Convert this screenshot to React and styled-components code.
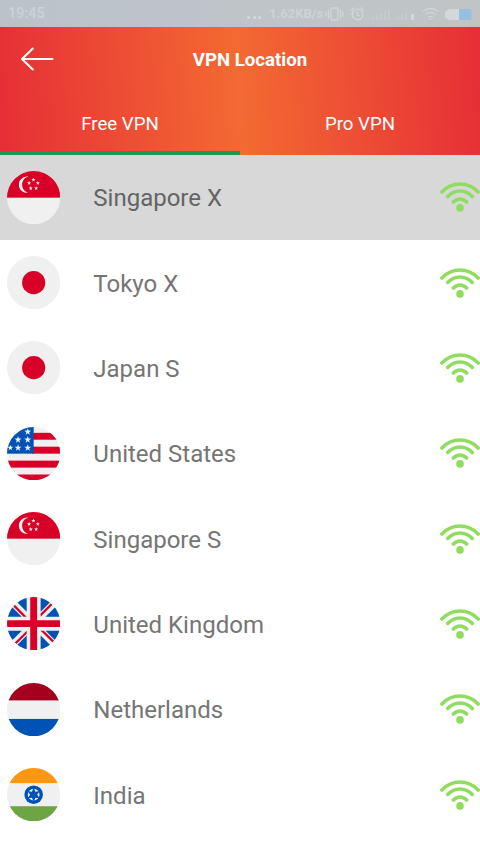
import React, { useState } from "react";
import styled, { createGlobalStyle } from "styled-components";

const RED = "#d80027";
const BLUE = "#0052b4";
const WHITE = "#f0f0f0";

const starPoints = (cx, cy, r) =>
  Array.from({ length: 10 }, (_, i) => {
    const radius = i % 2 ? r * 0.4 : r;
    const angle = (Math.PI / 5) * i - Math.PI / 2;
    return `${(cx + radius * Math.cos(angle)).toFixed(1)},${(
      cy +
      radius * Math.sin(angle)
    ).toFixed(1)}`;
  }).join(" ");

const Star = ({ x, y, r, fill = WHITE }) => (
  <polygon points={starPoints(x, y, r)} fill={fill} />
);

const Singapore = () => (
  <>
    <rect width="512" height="256" fill={RED} />
    <path
      d="M145 131c0-38 27-70 63-77-5-1-10-2-15-2-44 0-79 35-79 79s35 79 79 79c5 0 10-1 15-2-36-7-63-39-63-77z"
      fill={WHITE}
    />
    <Star x={254} y={84} r={21} />
    <Star x={212} y={116} r={21} />
    <Star x={296} y={116} r={21} />
    <Star x={228} y={166} r={21} />
    <Star x={280} y={166} r={21} />
  </>
);

const Japan = () => <circle cx="256" cy="256" r="111" fill={RED} />;

const UnitedStates = () => (
  <>
    <rect x="240" y="56" width="272" height="66" fill={RED} />
    <rect x="240" y="189" width="272" height="67" fill={RED} />
    <rect y="323" width="512" height="67" fill={RED} />
    <rect y="456" width="512" height="56" fill={RED} />
    <rect width="256" height="256" fill={BLUE} />
    <Star x={199} y={46} r={35} />
    <Star x={106} y={122} r={35} />
    <Star x={199} y={122} r={35} />
    <Star x={32} y={200} r={30} />
    <Star x={106} y={200} r={35} />
    <Star x={199} y={200} r={35} />
  </>
);

const UnitedKingdom = () => (
  <>
    <g fill={BLUE}>
      <path d="M53 100 0 60v129h142z" />
      <path d="M100 53 60 0h129v142z" />
      <path d="M412 53 452 0H323v142z" />
      <path d="m459 100 53-40v129H370z" />
      <path d="M53 412 0 452V323h142z" />
      <path d="m100 459-40 53h129V370z" />
      <path d="m412 459 40 53H323V370z" />
      <path d="m459 412 53 40V323H370z" />
    </g>
    <g fill={RED}>
      <path d="M223 0h66v512h-66z" />
      <path d="M0 223h512v66H0z" />
      <path d="m323 323 114 114 15-16-98-98z" />
      <path d="M189 323 75 437l16 15 98-98z" />
      <path d="M189 189 75 75 60 91l98 98z" />
      <path d="M323 189 437 75l-16-15-98 98z" />
    </g>
  </>
);

const Netherlands = () => (
  <>
    <rect width="512" height="167" fill="#a2001d" />
    <rect y="345" width="512" height="167" fill={BLUE} />
  </>
);

const India = () => (
  <>
    <rect width="512" height="145" fill="#ff9811" />
    <rect y="367" width="512" height="145" fill="#6da544" />
    <circle cx="256" cy="256" r="89" fill={BLUE} />
    <circle cx="256" cy="256" r="56" fill={WHITE} />
    <path
      d="m256 188 17 39 42-5-25 34 25 34-42-5-17 39-17-39-42 5 25-34-25-34 42 5z"
      fill={BLUE}
    />
  </>
);

const flags = {
  sg: Singapore,
  jp: Japan,
  us: UnitedStates,
  uk: UnitedKingdom,
  nl: Netherlands,
  in: India,
};

const Flag = ({ code }) => {
  const Pattern = flags[code];
  const clipId = React.useId();
  return (
    <FlagIcon viewBox="0 0 512 512">
      <clipPath id={clipId}>
        <circle cx="256" cy="256" r="256" />
      </clipPath>
      <g clipPath={`url(#${clipId})`}>
        <rect width="512" height="512" fill={WHITE} />
        <Pattern />
      </g>
    </FlagIcon>
  );
};

const Signal = () => (
  <SignalIcon viewBox="0 0 40 32">
    <path d="M1.900 11C12 .4 28 .4 38.100 11" />
    <path d="M7.700 15.400c7-7.300 17.600-7.300 24.600 0" />
    <path d="M13.300 21c4-4.100 9.400-4.100 13.400 0" />
    <circle cx="20" cy="26.900" r="3.800" />
  </SignalIcon>
);

const servers = [
  { name: "Singapore X", flag: "sg" },
  { name: "Tokyo X", flag: "jp" },
  { name: "Japan S", flag: "jp" },
  { name: "United States", flag: "us" },
  { name: "Singapore S", flag: "sg" },
  { name: "United Kingdom", flag: "uk" },
  { name: "Netherlands", flag: "nl" },
  { name: "India", flag: "in" },
];

const App = () => {
  const [tab, setTab] = useState("Free VPN");
  const [selected, setSelected] = useState(0);

  return (
    <Screen>
      <GlobalStyle />
      <StatusBar>
        <Clock>19:45</Clock>
        <Dots>
          <i />
          <i />
          <i />
        </Dots>
        <Speed>1.62KB/s</Speed>
        <StatusIcons viewBox="0 0 150 20">
          <g fill="none" stroke="#d1d6d9" strokeWidth="1.3">
            <rect x="7" y="4" width="7" height="12" rx="1" />
            <path d="M4.500 5.500v9M16.500 5.500v9M2 7.500v5M19 7.500v5" />
            <circle cx="33.500" cy="10.500" r="5.300" />
            <path d="M33.500 7.500v3.500l2.500 1M27 6.500l3.500-3M40 6.500l-3.500-3" />
            <path d="M99 7.500c4.500-4 10.500-4 15 0M101.500 10.500c3-2.500 7-2.500 10 0M104 13.300c1.600-1.200 3.400-1.200 5 0" />
          </g>
          <path
            d="M48 13h2v3h-2zM52 11h2v5h-2zM56 9h2v7h-2zM60 7h2v9h-2zM64 5h2v11h-2zM73 13h2v3h-2zM77 11h2v5h-2zM81 9h2v7h-2z"
            fill="#c5cacd"
          />
          <path d="M87 10h3v6h-3z" fill="#d3d8db" />
          <circle cx="106.500" cy="15" r="1" fill="#d1d6d9" />
          <path
            d="M121 7h2c0-1.500 1-2 2-2h10v11h-10c-1 0-2-.5-2-2h-2z"
            fill="#d4d8da"
          />
          <path
            d="M135 5h11q1.500 0 1.500 1.500v8q0 1.500-1.500 1.500h-11z"
            fill="#97c0df"
          />
        </StatusIcons>
      </StatusBar>
      <Header>
        <TitleBar>
          <BackButton aria-label="Back">
            <svg viewBox="0 0 34 24" width="34" height="24">
              <path d="M12.800 1.500 2 12l10.800 10.500M2 12h30.500" />
            </svg>
          </BackButton>
          <Title>VPN Location</Title>
        </TitleBar>
        <Tabs>
          {["Free VPN", "Pro VPN"].map((label) => (
            <Tab
              key={label}
              $active={tab === label}
              onClick={() => setTab(label)}
            >
              {label}
            </Tab>
          ))}
        </Tabs>
      </Header>
      <ServerList>
        {servers.map((server, index) => (
          <ServerRow
            key={server.name}
            $selected={selected === index}
            onClick={() => setSelected(index)}
          >
            <Flag code={server.flag} />
            <ServerName>{server.name}</ServerName>
            <Signal />
          </ServerRow>
        ))}
      </ServerList>
    </Screen>
  );
};

export default App;

const GlobalStyle = createGlobalStyle`
  * {
    box-sizing: border-box;
  }
  body {
    margin: 0;
    background: #fff;
    font-family: Roboto, "Liberation Sans", sans-serif;
  }
`;

const Screen = styled.div`
  display: flex;
  flex-direction: column;
  width: 480px;
  height: 853px;
  overflow: hidden;
  background: #fff;
`;

const StatusBar = styled.div`
  display: flex;
  align-items: center;
  flex: none;
  height: 26.67px;
  padding: 1px 6px 0 8px;
  background: linear-gradient(90deg, #bbc2ca, #bec4c8 50%, #c0c4c5);
  color: #ced3d8;
`;

const Clock = styled.span`
  flex: 1;
  font-size: 14.5px;
  font-weight: 500;
`;

const Dots = styled.span`
  display: flex;
  gap: 2.5px;
  margin: 7px 8px 0 0;
  i {
    width: 3px;
    height: 3px;
    border-radius: 50%;
    background: #d7dbde;
  }
`;

const Speed = styled.span`
  width: 55px;
  font-size: 13px;
  font-weight: 700;
  white-space: nowrap;
`;

const StatusIcons = styled.svg`
  width: 150px;
  height: 20px;
`;

const Header = styled.header`
  flex: none;
  height: 128px;
  background: linear-gradient(86deg, #e62e36, #f36a32 50%, #e62e36);
  color: #fff;
`;

const TitleBar = styled.div`
  display: grid;
  grid-template-columns: 74px 1fr 54px;
  align-items: center;
  height: 64px;
`;

const BackButton = styled.button`
  display: flex;
  padding: 0 0 0 20px;
  border: none;
  background: none;
  cursor: pointer;
  svg {
    fill: none;
    stroke: #fff;
    stroke-width: 2;
    stroke-linecap: round;
    stroke-linejoin: round;
  }
`;

const Title = styled.h1`
  margin: 0;
  padding-top: 2px;
  font-size: 18.67px;
  font-weight: 700;
  text-align: center;
`;

const Tabs = styled.div`
  display: flex;
  height: 64px;
`;

const Tab = styled.button`
  flex: 1;
  padding: 6px 0 0;
  border: none;
  border-bottom: 4px solid ${({ $active }) => ($active ? "#219653" : "transparent")};
  background: none;
  color: #fff;
  font-family: inherit;
  font-size: 18.67px;
  cursor: pointer;
`;

const ServerList = styled.ul`
  margin: 0;
  padding: 0;
  list-style: none;
`;

const ServerRow = styled.li`
  display: flex;
  align-items: center;
  height: 85.33px;
  padding-left: 6.67px;
  background: ${({ $selected }) => ($selected ? "#d8d8d8" : "#fff")};
  color: ${({ $selected }) => ($selected ? "#646464" : "#757575")};
  cursor: pointer;
`;

const FlagIcon = styled.svg`
  flex: none;
  width: 53.33px;
  height: 53.33px;
`;

const ServerName = styled.span`
  flex: 1;
  padding: 2px 0 0 33.33px;
  font-size: 24px;
`;

const SignalIcon = styled.svg`
  flex: none;
  width: 40px;
  height: 32px;
  path {
    fill: none;
    stroke: #8fdd5f;
    stroke-width: 3.6;
    stroke-linecap: round;
  }
  circle {
    fill: #8fdd5f;
  }
`;
